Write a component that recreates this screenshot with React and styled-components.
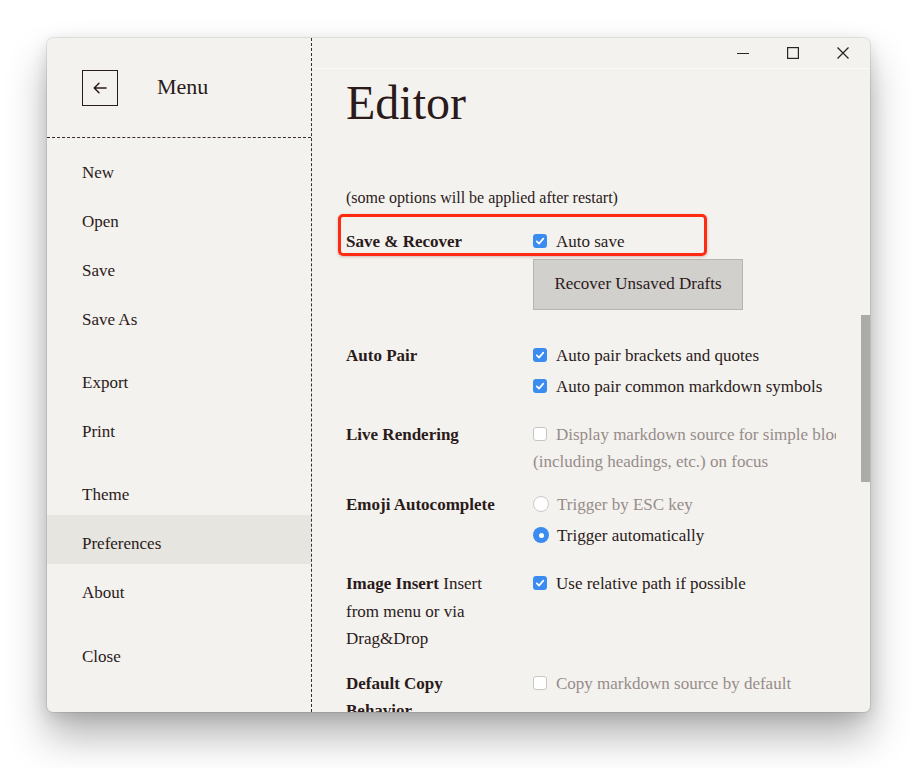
import React from 'react';
import styled, { createGlobalStyle } from 'styled-components';

const GlobalStyle = createGlobalStyle`
    html, body {
        margin:0;
        padding:0;
        background:#ffffff;
    }
    body {
        font-family:"Liberation Serif", "Times New Roman", serif;
        color:#2b1a1a;
    }
`;

const Page = styled.div`
    min-height:100vh;
    box-sizing:border-box;
    padding:38px 0 0 47px;
`;

const Window = styled.div`
    width:823px;
    height:674px;
    display:flex;
    background:#f3f2ee;
    border-radius:6px;
    overflow:hidden;
    box-shadow:0 24px 40px rgba(0,0,0,0.3), 0 4px 16px rgba(0,0,0,0.12), 0 0 0 1px rgba(0,0,0,0.08);
`;

const Sidebar = styled.aside`
    width:264px;
    flex-shrink:0;
    border-right:1px dashed #3a2c2c;
    display:flex;
    flex-direction:column;
`;

const SidebarHeader = styled.div`
    height:99px;
    display:flex;
    align-items:center;
    padding-left:35px;
    border-bottom:1px dashed #3a2c2c;
`;

const BackButton = styled.button`
    width:36px;
    height:36px;
    padding:0;
    display:flex;
    align-items:center;
    justify-content:center;
    background:transparent;
    border:1.5px solid #2b1a1a;
    color:#2b1a1a;
`;

const MenuTitle = styled.h2`
    margin:-2px 0 0 39px;
    font-size:22px;
    font-weight:normal;
`;

const MenuList = styled.ul`
    list-style:none;
    margin:0;
    padding:6px 0 0;
`;

const MenuItem = styled.li`
    height:49px;
    box-sizing:border-box;
    padding:8px 0 0 35px;
    margin-top:${props => props.gap || 0}px;
    display:flex;
    align-items:center;
    font-size:17px;
    background:${props => props.active ? '#e6e5df' : 'transparent'};
`;

const Main = styled.main`
    flex:1;
    position:relative;
    display:flex;
    flex-direction:column;
    overflow:hidden;
`;

const TitleBar = styled.div`
    height:30px;
    flex-shrink:0;
    display:flex;
    justify-content:flex-end;
    padding-right:2px;
    border-bottom:1px solid rgba(255,255,255,0.5);
`;

const WinButton = styled.div`
    width:50px;
    display:flex;
    align-items:center;
    justify-content:center;
`;

const Content = styled.div`
    padding:0 0 0 34px;
`;

const Title = styled.h1`
    margin:6px 0 52.5px;
    font-size:48px;
    line-height:56px;
    font-weight:normal;
`;

const Note = styled.p`
    margin:0 0 16.5px;
    font-size:16px;
    line-height:27.5px;
`;

const Row = styled.div`
    position:relative;
    width:490px;
    display:grid;
    grid-template-columns:155px 1fr;
    column-gap:32px;
    margin-bottom:${props => props.gap ?? 17}px;
    font-size:17px;
    line-height:27.5px;
`;

const Label = styled.div`
    b { font-weight:bold; }
`;

const Controls = styled.div`
    overflow:hidden;
`;

const Option = styled.div`
    margin-bottom:3.5px;
    color:${props => props.muted ? '#978c8a' : '#2b1a1a'};
`;

const NoWrap = styled.span`
    white-space:nowrap;
`;

const Box = styled.span`
    display:inline-block;
    width:14px;
    height:14px;
    box-sizing:border-box;
    margin-right:9px;
    vertical-align:-1px;
    border-radius:3px;
    background:${props => props.checked ? '#3a8cf0' : '#ffffff'};
    border:${props => props.checked ? 'none' : '1px solid #c9c5c2'};
    svg { display:block; }
`;

const Radio = styled.span`
    display:inline-block;
    width:16px;
    height:16px;
    box-sizing:border-box;
    margin-right:8px;
    vertical-align:-2px;
    border-radius:50%;
    background:${props => props.checked ? '#3a8cf0' : '#ffffff'};
    border:${props => props.checked ? 'none' : '1px solid #cdc9c6'};
    position:relative;
    &::after {
        content:'';
        display:${props => props.checked ? 'block' : 'none'};
        position:absolute;
        left:5.5px;
        top:5.5px;
        width:5px;
        height:5px;
        border-radius:50%;
        background:#ffffff;
    }
`;

const ActionButton = styled.button`
    display:block;
    margin:1px 0 15px;
    width:210px;
    height:51px;
    font-family:inherit;
    font-size:17px;
    color:#2b1a1a;
    background:#d1d0cd;
    border:1px solid #b7b5b2;
`;

const Highlight = styled.div`
    position:absolute;
    left:-8px;
    top:-14px;
    width:369px;
    height:42px;
    box-sizing:border-box;
    border:3px solid #ff2a12;
    border-radius:5px;
    box-shadow:0 1px 3px rgba(120,0,0,0.25);
    pointer-events:none;
`;

const ScrollThumb = styled.div`
    position:absolute;
    right:0;
    top:277px;
    width:9px;
    height:167px;
    background:#adaba6;
`;

const Checkbox = ({checked}) => (
    <Box checked={checked}>
        {checked && (
            <svg width="14" height="14" viewBox="0 0 14 14">
                <path d="M3.8 7.4 L6 9.6 L10.3 4.6" fill="none" stroke="#fff" strokeWidth="1.7" strokeLinecap="round" strokeLinejoin="round" />
            </svg>
        )}
    </Box>
);

const menu = [
    {label:'New'},
    {label:'Open'},
    {label:'Save'},
    {label:'Save As'},
    {label:'Export', gap:14},
    {label:'Print'},
    {label:'Theme', gap:14},
    {label:'Preferences', active:true},
    {label:'About'},
    {label:'Close', gap:15},
];

const App = () => {
    return(
        <Page>
            <GlobalStyle />
            <Window>
                <Sidebar>
                    <SidebarHeader>
                        <BackButton>
                            <svg width="18" height="18" viewBox="0 0 18 18">
                                <path d="M15 9 H3.2 M8 4.2 L3.2 9 L8 13.8" fill="none" stroke="currentColor" strokeWidth="1.5" strokeLinecap="round" strokeLinejoin="round" />
                            </svg>
                        </BackButton>
                        <MenuTitle>Menu</MenuTitle>
                    </SidebarHeader>
                    <MenuList>
                        {menu.map(item => (
                            <MenuItem key={item.label} gap={item.gap} active={item.active}>{item.label}</MenuItem>
                        ))}
                    </MenuList>
                </Sidebar>
                <Main>
                    <TitleBar>
                        <WinButton>
                            <svg width="14" height="14" viewBox="0 0 14 14">
                                <path d="M1 7.5 H13" stroke="#2b2424" strokeWidth="1.2" />
                            </svg>
                        </WinButton>
                        <WinButton>
                            <svg width="14" height="14" viewBox="0 0 14 14">
                                <rect x="1.6" y="1.6" width="10.8" height="10.8" fill="none" stroke="#2b2424" strokeWidth="1.2" />
                            </svg>
                        </WinButton>
                        <WinButton>
                            <svg width="14" height="14" viewBox="0 0 14 14">
                                <path d="M1.5 1.5 L12.5 12.5 M12.5 1.5 L1.5 12.5" stroke="#2b2424" strokeWidth="1.3" />
                            </svg>
                        </WinButton>
                    </TitleBar>
                    <Content>
                        <Title>Editor</Title>
                        <Note>(some options will be applied after restart)</Note>

                        <Row>
                            <Label><b>Save &amp; Recover</b></Label>
                            <Controls>
                                <Option><Checkbox checked />Auto save</Option>
                                <ActionButton>Recover Unsaved Drafts</ActionButton>
                            </Controls>
                            <Highlight />
                        </Row>

                        <Row>
                            <Label><b>Auto Pair</b></Label>
                            <Controls>
                                <Option><Checkbox checked />Auto pair brackets and quotes</Option>
                                <Option><Checkbox checked />Auto pair common markdown symbols</Option>
                            </Controls>
                        </Row>

                        <Row gap={12}>
                            <Label><b>Live Rendering</b></Label>
                            <Controls>
                                <Option muted>
                                    <NoWrap><Checkbox />Display markdown source for simple blocks</NoWrap>
                                    <br />
                                    (including headings, etc.) on focus
                                </Option>
                            </Controls>
                        </Row>

                        <Row>
                            <Label><b>Emoji Autocomplete</b></Label>
                            <Controls>
                                <Option muted><Radio />Trigger by ESC key</Option>
                                <Option><Radio checked />Trigger automatically</Option>
                            </Controls>
                        </Row>

                        <Row>
                            <Label><b>Image Insert</b> Insert from menu or via Drag&amp;Drop</Label>
                            <Controls>
                                <Option><Checkbox checked />Use relative path if possible</Option>
                            </Controls>
                        </Row>

                        <Row>
                            <Label><b>Default Copy Behavior</b></Label>
                            <Controls>
                                <Option muted><Checkbox />Copy markdown source by default</Option>
                            </Controls>
                        </Row>
                    </Content>
                    <ScrollThumb />
                </Main>
            </Window>
        </Page>
    );
}

export default App;
